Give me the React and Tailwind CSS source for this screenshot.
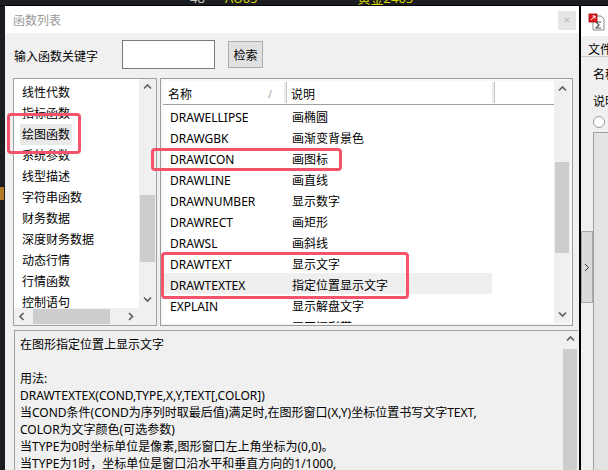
import React from "react";

const Chevron = ({ dir }) => {
  const d = {
    up: "M1 5.5 L4.5 2 L8 5.5",
    down: "M1 2.5 L4.5 6 L8 2.5",
    left: "M5.5 1 L2 4.5 L5.5 8",
    right: "M3 1 L6.5 4.5 L3 8",
  }[dir];
  return (
    <svg width="9" height="9" viewBox="0 0 9 9">
      <path d={d} fill="none" stroke="#606060" strokeWidth="1.7" />
    </svg>
  );
};

const categories = [
  "线性代数", "指标函数", "绘图函数", "系统参数", "线型描述", "字符串函数",
  "财务数据", "深度财务数据", "动态行情", "行情函数", "控制语句",
];

const funcs = [
  ["DRAWELLIPSE", "画椭圆"],
  ["DRAWGBK", "画渐变背景色"],
  ["DRAWICON", "画图标"],
  ["DRAWLINE", "画直线"],
  ["DRAWNUMBER", "显示数字"],
  ["DRAWRECT", "画矩形"],
  ["DRAWSL", "画斜线"],
  ["DRAWTEXT", "显示文字"],
  ["DRAWTEXTEX", "指定位置显示文字"],
  ["EXPLAIN", "显示解盘文字"],
  ["FILLRGN", "画区间彩带"],
];

const helpLines = [
  "在图形指定位置上显示文字",
  "",
  "用法:",
  "DRAWTEXTEX(COND,TYPE,X,Y,TEXT[,COLOR])",
  "当COND条件(COND为序列时取最后值)满足时,在图形窗口(X,Y)坐标位置书写文字TEXT,",
  "COLOR为文字颜色(可选参数)",
  "当TYPE为0时坐标单位是像素,图形窗口左上角坐标为(0,0)。",
  "当TYPE为1时，坐标单位是窗口沿水平和垂直方向的1/1000,",
  "X,Y取值范围是0-999,超出范围则不显示。",
];

function CategoryList() {
  return (
    <div className="w-[144px] h-[248px] border border-[#a0a0a0] bg-white flex flex-col">
      <div className="flex flex-1 min-h-0">
        <div className="flex-1 overflow-hidden pl-[6px] pt-[3px]">
          {categories.map((c, i) => (
            <div key={c} className="h-[21px] leading-[21px]">
              <span className={`px-[2px] py-[2px] ${i === 2 ? "bg-[#e9e9e9]" : ""}`}>{c}</span>
            </div>
          ))}
        </div>
        <div className="w-[17px] bg-[#f0f0f0] flex flex-col">
          <div className="h-[17px] flex items-center justify-center"><Chevron dir="up" /></div>
          <div className="h-[99px]" />
          <div className="h-[67px] bg-[#cdcdcd] mx-[1px]" />
          <div className="flex-1" />
          <div className="h-[17px] flex items-center justify-center"><Chevron dir="down" /></div>
        </div>
      </div>
      <div className="h-[17px] flex bg-[#f0f0f0]">
        <div className="w-[17px] flex items-center justify-center"><Chevron dir="left" /></div>
        <div className="ml-[2px] w-[77px] bg-[#cdcdcd] my-[1px]" />
        <div className="flex-1" />
        <div className="w-[17px] flex items-center justify-center"><Chevron dir="right" /></div>
        <div className="w-[17px]" />
      </div>
    </div>
  );
}

function FuncTable() {
  return (
    <div className="w-[413px] h-[248px] border border-[#9c9c9c] bg-[#f7f7f7] p-[2px] flex">
      <div className="flex-1 bg-white flex flex-col overflow-hidden">
        <div className="h-[24px] flex border-b border-[#a0a0a0] leading-[23px]">
          <div className="w-[121px] pl-[5px] pr-[12px] pt-[2px] flex justify-between">
            <span>名称</span>
            <span className="text-[10px] text-[#999]">/</span>
          </div>
          <div className="w-[3px] bg-[#ececec] border-r border-[#c8c8c8] my-[1px]" />
          <div className="w-[205px] pl-[4px] pt-[2px]">说明</div>
          <div className="w-[3px] bg-[#ececec] border-r border-[#c8c8c8] my-[1px]" />
          <div className="flex-1" />
        </div>
        {funcs.map(([n, d]) => (
          <div key={n} className="h-[21px] flex shrink-0">
            <div className={`flex w-[329px] h-[21px] pt-[2px] leading-[21px] ${n === "DRAWTEXTEX" ? "bg-[#efefef]" : ""}`}>
              <div className="w-[123px] pl-[7px]">{n}</div>
              <div className="flex-1 pl-[6px]">{d}</div>
            </div>
          </div>
        ))}
      </div>
      <div className="w-[16px] bg-[#f0f0f0] flex flex-col">
        <div className="h-[17px] flex items-center justify-center"><Chevron dir="up" /></div>
        <div className="h-[64px]" />
        <div className="h-[91px] bg-[#cdcdcd] mx-[1px]" />
        <div className="flex-1" />
        <div className="h-[17px] flex items-center justify-center"><Chevron dir="down" /></div>
      </div>
    </div>
  );
}

export default function App() {
  return (
    <div className="relative w-[608px] h-[470px] overflow-hidden bg-[#1b1d21] text-[12px] text-black font-['Noto_Sans','Noto_Sans_CJK_SC',sans-serif]">
      {/* background app strip */}
      <div className="h-[6px] overflow-hidden flex text-[13px] leading-[14px] border-b border-black">
        <span className="ml-[190px] -mt-[9px] text-[#c8c8c8]">48</span>
        <span className="ml-[20px] -mt-[9px] text-[#d8d800]">AU05</span>
        <span className="ml-[100px] -mt-[9px] text-[#d8d800]">黄金2405</span>
      </div>

      <div className="flex h-[464px]">
        <div className="w-[5px] bg-[#1b1d21] flex flex-col">
          <div className="h-[181px]" />
          <div className="h-[13px] w-[4px] bg-[#b07a28]" />
        </div>

        {/* dialog */}
        <div className="w-[574px] flex flex-col bg-[#f0f0f0]">
          <div className="h-[30px] bg-white flex items-center justify-between">
            <span className="pl-[8px] pt-[3px] text-[#9a9a9a]">函数列表</span>
            <div className="w-[18px] h-[19px] mr-[3px] mt-[1px] bg-[#e6e6e6] flex items-center justify-center text-[#b8b8b8] text-[11px]">×</div>
          </div>

          <div className="flex flex-col pl-[8px]">
            <div className="flex items-start mt-[7px] h-[29px]">
              <div className="w-[109px] pl-[1px] pt-[2px] leading-[29px]">输入函数关键字</div>
              <div className="w-[93px] h-[29px] bg-white border border-[#7a7a7a]" />
              <div className="ml-[13px] mt-[1px] w-[35px] h-[27px] pt-[3px] bg-[#e1e1e1] border border-[#adadad] flex items-center justify-center">检索</div>
            </div>

            <div className="flex mt-[9px] gap-[3px]">
              <CategoryList />
              <FuncTable />
            </div>

            <div className="ml-[1px] mt-[4px] w-[564px] h-[140px] border-t border-l border-[#a0a0a0] flex">
              <div className="flex-1 pl-[5px] pt-[5px] leading-[17px] overflow-hidden">
                {helpLines.map((l, i) => (
                  <div key={i} className="h-[17px] whitespace-nowrap">{l}</div>
                ))}
              </div>
              <div className="w-[16px] flex flex-col">
                <div className="h-[17px] flex items-center justify-center"><Chevron dir="up" /></div>
                <div className="flex-1 bg-[#cdcdcd] mx-[1px] mt-[1px]" />
              </div>
            </div>
          </div>
        </div>

        <div className="w-[2px] bg-black" />

        {/* right window */}
        <div className="flex-1 bg-[#f0f0f0] flex flex-col overflow-hidden">
          <div className="h-[30px] bg-white flex items-start pl-[7px] pt-[7px]">
            <svg width="18" height="18" viewBox="0 0 18 18">
              <path d="M5 3 H13 L16 6 V17 H5 Z" fill="#fff" stroke="#8a8a8a" />
              <path d="M8 9 H13 M8 9 L11 12 L8 15 H13" fill="none" stroke="#555" strokeWidth="1.2" />
              <rect x="1" y="1" width="8" height="8" fill="#e02020" stroke="#a00000" strokeWidth="0.8" />
              <path d="M3 7 L7 3 M4.5 3 H7 V5.5" fill="none" stroke="#fff" strokeWidth="1" />
            </svg>
          </div>
          <div className="h-[21px] pl-[7px] pt-[3px] leading-[21px] whitespace-nowrap border-b border-[#c9c9c9]">文件</div>
          <div className="flex-1 flex">
            <div className="w-[17px] flex flex-col">
              <div className="h-[174px]" />
              <div className="w-[12px] h-[72px] bg-[#dadada] border border-[#a8a8a8] flex items-center justify-center">
                <svg width="6" height="9" viewBox="0 0 6 9"><path d="M1 1 L4.5 4.5 L1 8" fill="none" stroke="#333" strokeWidth="1" /></svg>
              </div>
            </div>
            <div className="flex-1 flex flex-col whitespace-nowrap">
              <div className="h-[28px] leading-[28px] pt-[4px]">名称</div>
              <div className="h-[28px] leading-[28px] pt-[3px]">说明</div>
              <div className="h-[17px] flex items-center">
                <div className="w-[12px] h-[12px] rounded-full border border-[#9a9a9a] bg-white" />
              </div>
              <div className="mt-[2px] flex-1 bg-[#e3e3e3] border-l border-t border-[#a0a0a0]" />
            </div>
          </div>
        </div>
      </div>

      {/* red annotation boxes */}
      <div className="absolute left-[7px] top-[113px] w-[74px] h-[41px] border-[3px] border-[#f3536b] rounded-[4px]" />
      <div className="absolute left-[151px] top-[148px] w-[191px] h-[23px] border-[3px] border-[#f3536b] rounded-[4px]" />
      <div className="absolute left-[161px] top-[252px] w-[248px] h-[47px] border-[3px] border-[#f3536b] rounded-[4px]" />
    </div>
  );
}
